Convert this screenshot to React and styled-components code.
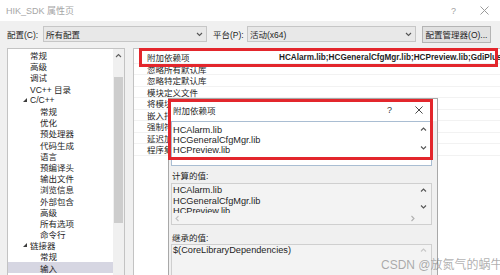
import React from "react";
import styled, { createGlobalStyle } from "styled-components";

const GlobalStyle = createGlobalStyle`
  html, body {
    margin: 0;
    padding: 0;
    background: #f0f0f0;
  }
  body {
    font-family: "Liberation Sans", "Noto Sans CJK SC", sans-serif;
    font-size: 8.5px;
    color: #1e1e1e;
  }
  * {
    box-sizing: border-box;
  }
`;

const treeItems = [
  { label: "常规", level: 0 },
  { label: "高级", level: 0 },
  { label: "调试", level: 0 },
  { label: "VC++ 目录", level: 0 },
  { label: "C/C++", level: 0, open: true },
  { label: "常规", level: 1 },
  { label: "优化", level: 1 },
  { label: "预处理器", level: 1 },
  { label: "代码生成", level: 1 },
  { label: "语言", level: 1 },
  { label: "预编译头", level: 1 },
  { label: "输出文件", level: 1 },
  { label: "浏览信息", level: 1 },
  { label: "外部包含", level: 1 },
  { label: "高级", level: 1 },
  { label: "所有选项", level: 1 },
  { label: "命令行", level: 1 },
  { label: "链接器", level: 0, open: true },
  { label: "常规", level: 1 },
  { label: "输入", level: 1, selected: true },
];

const properties = [
  { name: "附加依赖项", value: "HCAlarm.lib;HCGeneralCfgMgr.lib;HCPreview.lib;GdiPlus.lib;%(AdditionalDependencies)" },
  { name: "忽略所有默认库" },
  { name: "忽略特定默认库" },
  { name: "模块定义文件" },
  { name: "将模块添加到程序集" },
  { name: "嵌入托管资源文件" },
  { name: "强制符号引用" },
  { name: "延迟加载的 DLL" },
  { name: "程序集链接资源" },
];

const libs = ["HCAlarm.lib", "HCGeneralCfgMgr.lib", "HCPreview.lib"];

const chevrons = {
  down: "M1 2 L3.5 4.5 L6 2",
  up: "M1 5 L3.5 2.5 L6 5",
  left: "M4.5 1 L2 3.5 L4.5 6",
  right: "M2.5 1 L5 3.5 L2.5 6",
};

const Chevron = ({ dir = "down", color = "#555" }) => (
  <svg width="7" height="7" viewBox="0 0 7 7">
    <path d={chevrons[dir]} fill="none" stroke={color} strokeWidth="1.1" />
  </svg>
);

const CloseIcon = ({ color, size = 9 }) => (
  <svg width={size} height={size} viewBox="0 0 9 9">
    <path d="M0.5 0.5 L8.5 8.5 M8.5 0.5 L0.5 8.5" stroke={color} strokeWidth="1" />
  </svg>
);

const App = () => {
  return (
    <Window>
      <GlobalStyle />
      <TitleBar>
        <Title>HIK_SDK 属性页</Title>
        <Caption $color="#a0a0a0">?</Caption>
        <Caption>
          <CloseIcon color="#9a9a9a" />
        </Caption>
      </TitleBar>

      <ConfigRow>
        <FieldLabel $width={36}>配置(C):</FieldLabel>
        <Select $width={164}>
          所有配置
          <Chevron />
        </Select>
        <FieldLabel $width={34} $gap={6}>平台(P):</FieldLabel>
        <Select $width={169}>
          活动(x64)
          <Chevron />
        </Select>
        <Button>配置管理器(O)...</Button>
      </ConfigRow>

      <Body>
        <Tree>
          <TreeList>
            {treeItems.map((item, i) => (
              <TreeItem key={i} $level={item.level} $selected={item.selected}>
                <Expander>{item.open && <OpenMark />}</Expander>
                {item.label}
              </TreeItem>
            ))}
          </TreeList>
          <TreeScroll>
            <ArrowCell>
              <Chevron dir="up" color="#606060" />
            </ArrowCell>
            <Thumb />
          </TreeScroll>
        </Tree>

        <PropertyPanel>
          <Grid>
            {properties.map((p) => (
              <PropRow key={p.name}>
                <PropName>{p.name}</PropName>
                <PropValue>{p.value}</PropValue>
              </PropRow>
            ))}
          </Grid>
          <GridScroll />
        </PropertyPanel>
      </Body>

      <Dialog>
        <DialogTitle>
          <DialogCaption>附加依赖项</DialogCaption>
          <DialogButton>?</DialogButton>
          <DialogButton>
            <CloseIcon color="#333" size={8} />
          </DialogButton>
        </DialogTitle>
        <DialogBody>
          <EditBox>
            <BoxRow>
              <Lines $top={3}>
                {libs.map((l) => (
                  <Line key={l}>{l}</Line>
                ))}
              </Lines>
              <VScroll $bottom={10} $cell={14}>
                <Chevron dir="up" />
                <Chevron dir="down" />
              </VScroll>
            </BoxRow>
          </EditBox>

          <SectionLabel $gap={3}>计算的值:</SectionLabel>
          <ReadBox $height={42} $gap={2}>
            <BoxRow>
              <Lines $top={1} $lh={10.5}>
                {libs.map((l) => (
                  <Line key={l}>{l}</Line>
                ))}
              </Lines>
              <VScroll $bottom={0} $cell={12}>
                <Chevron dir="up" />
                <Chevron dir="down" />
              </VScroll>
            </BoxRow>
            <HScroll>
              <Chevron dir="left" color="#c2c2c2" />
              <Chevron dir="right" color="#b0b0b0" />
            </HScroll>
          </ReadBox>

          <SectionLabel $gap={6}>继承的值:</SectionLabel>
          <ReadBox $height={60} $gap={1}>
            <BoxRow>
              <Lines $top={0}>
                <Line>$(CoreLibraryDependencies)</Line>
              </Lines>
              <VScroll $bottom={0} $cell={10}>
                <Chevron dir="up" color="#c8c8c8" />
              </VScroll>
            </BoxRow>
          </ReadBox>
        </DialogBody>
      </Dialog>

      <Highlight $left={139} $top={48} $width={359} $height={19} />
      <Highlight $left={168} $top={99} $width={265} $height={61} />

      <Watermark>CSDN @放氮气的蜗牛</Watermark>
    </Window>
  );
};

const Window = styled.div`
  position: relative;
  width: 500px;
  height: 275px;
  overflow: hidden;
  background: #f0f0f0;
`;

const TitleBar = styled.div`
  height: 21px;
  display: flex;
  align-items: center;
  padding-left: 6px;
  background: #fff;
`;

const Title = styled.span`
  flex: 1;
  font-size: 9px;
  color: #a6a6a6;
`;

const Caption = styled.span`
  width: 31px;
  height: 21px;
  display: flex;
  align-items: center;
  justify-content: center;
  font-size: 9px;
  color: ${(p) => p.$color || "#999"};
`;

const ConfigRow = styled.div`
  height: 26px;
  display: flex;
  align-items: center;
  padding-left: 7px;
`;

const FieldLabel = styled.span`
  flex: none;
  width: ${(p) => p.$width}px;
  margin-left: ${(p) => p.$gap || 0}px;
  white-space: nowrap;
`;

const Select = styled.div`
  flex: none;
  width: ${(p) => p.$width}px;
  height: 16px;
  display: flex;
  align-items: center;
  justify-content: space-between;
  padding: 0 3px 0 2px;
  background: #e8e8e8;
  border: 1px solid #c6c6c6;
`;

const Button = styled.div`
  flex: none;
  width: 69px;
  height: 17px;
  margin-left: 6px;
  display: flex;
  align-items: center;
  justify-content: center;
  white-space: nowrap;
  background: #e1e1e1;
  border: 1px solid #b4b4b4;
`;

const Body = styled.div`
  height: 240px;
  display: flex;
  gap: 8px;
  padding: 1px 0 0 7px;
`;

const Tree = styled.div`
  flex: none;
  width: 118px;
  display: flex;
  background: #fff;
  border: 1px solid #c3c3c3;
`;

const TreeList = styled.div`
  flex: 1;
  padding-top: 0.5px;
`;

const TreeItem = styled.div`
  height: 11.2px;
  display: flex;
  align-items: center;
  padding-left: ${(p) => p.$level * 10 + 13}px;
  white-space: nowrap;
  background: ${(p) => (p.$selected ? "#d6d6e2" : "transparent")};
`;

const Expander = styled.span`
  flex: none;
  width: 9px;
  padding-left: 2px;
  display: flex;
  align-items: center;
`;

const OpenMark = styled.span`
  width: 0;
  height: 0;
  border-left: 4px solid transparent;
  border-bottom: 4px solid #3c3c3c;
`;

const TreeScroll = styled.div`
  flex: none;
  width: 11px;
  display: flex;
  flex-direction: column;
  background: #f0f0f0;
`;

const ArrowCell = styled.div`
  height: 13px;
  display: flex;
  align-items: center;
  justify-content: center;
`;

const Thumb = styled.div`
  height: 146px;
  margin: 15px 1px 0;
  background: #cdcdcd;
`;

const PropertyPanel = styled.div`
  flex: none;
  width: 375px;
  display: flex;
  background: #fff;
  border: 1px solid #c3c3c3;
`;

const Grid = styled.div`
  flex: 1;
  padding-top: 3px;
`;

const PropRow = styled.div`
  height: 11.5px;
  display: grid;
  grid-template-columns: 145px 1fr;
  align-items: center;
  border-bottom: 1px solid #f2f2f2;
`;

const PropName = styled.span`
  padding-left: 13px;
  white-space: nowrap;
  overflow: hidden;
`;

const PropValue = styled.span`
  white-space: nowrap;
  font-size: 8.2px;
  font-weight: bold;
`;

const GridScroll = styled.div`
  flex: none;
  width: 16px;
  background: #f4f4f4;
  border-left: 1px solid #e2e2e2;
`;

const Dialog = styled.div`
  position: absolute;
  left: 168px;
  top: 98px;
  width: 270px;
  height: 200px;
  display: flex;
  flex-direction: column;
  background: #f0f0f0;
  border: 1px solid #a8a8a8;
`;

const DialogTitle = styled.div`
  flex: none;
  height: 22px;
  display: flex;
  align-items: center;
  padding: 0 4px 0 4px;
  background: #fff;
`;

const DialogCaption = styled.span`
  flex: 1;
`;

const DialogButton = styled.span`
  width: 29px;
  display: flex;
  justify-content: center;
  font-size: 9px;
  color: #333;
`;

const DialogBody = styled.div`
  display: flex;
  flex-direction: column;
  padding: 0 5px 0 2px;
`;

const EditBox = styled.div`
  height: 45px;
  display: flex;
  flex-direction: column;
  background: #fff;
  border: 1px solid #a9bdd2;
`;

const ReadBox = styled.div`
  flex: none;
  height: ${(p) => p.$height}px;
  margin-top: ${(p) => p.$gap}px;
  display: flex;
  flex-direction: column;
  background: #f3f3f3;
  border: 1px solid #cfcfcf;
`;

const BoxRow = styled.div`
  flex: 1;
  min-height: 0;
  display: flex;
`;

const Lines = styled.div`
  flex: 1;
  overflow: hidden;
  padding: ${(p) => p.$top}px 0 0 1px;
  font-size: 9.2px;
  line-height: ${(p) => p.$lh || 10}px;
`;

const Line = styled.div`
  white-space: nowrap;
`;

const VScroll = styled.div`
  flex: none;
  width: 15px;
  display: flex;
  flex-direction: column;
  justify-content: space-between;
  align-items: center;
  padding-bottom: ${(p) => p.$bottom}px;

  svg {
    height: ${(p) => p.$cell}px;
  }
`;

const HScroll = styled.div`
  flex: none;
  height: 11px;
  margin-right: 15px;
  display: flex;
  align-items: center;
  justify-content: space-between;
  padding: 0 0 0 2px;
`;

const SectionLabel = styled.div`
  height: 12px;
  margin-top: ${(p) => p.$gap}px;
  display: flex;
  align-items: center;
  padding-left: 1px;
`;

const Highlight = styled.div`
  position: absolute;
  left: ${(p) => p.$left}px;
  top: ${(p) => p.$top}px;
  width: ${(p) => p.$width}px;
  height: ${(p) => p.$height}px;
  border: 3px solid #e3262c;
  pointer-events: none;
`;

const Watermark = styled.div`
  position: absolute;
  left: 381px;
  top: 255px;
  font-size: 12px;
  white-space: nowrap;
  color: rgba(120, 120, 120, 0.6);
`;

export default App;
